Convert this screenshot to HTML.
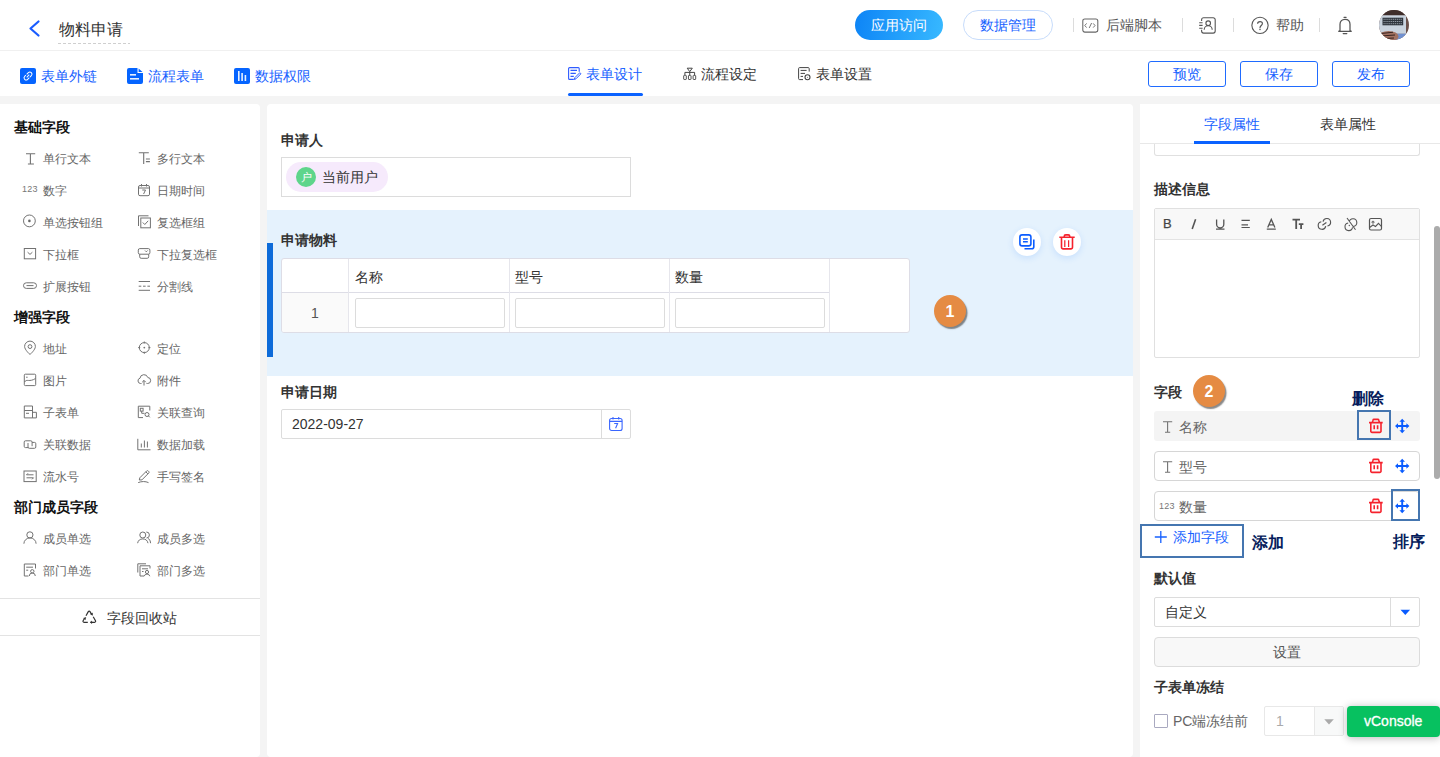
<!DOCTYPE html>
<html><head><meta charset="utf-8">
<style>
*{box-sizing:border-box;margin:0;padding:0}
html,body{width:1440px;height:757px;overflow:hidden}
body{position:relative;background:#f4f4f4;font-family:"Liberation Sans",sans-serif;font-size:14px;color:#333}
.a{position:absolute}
.t{position:absolute;white-space:nowrap;line-height:20px;font-size:14px}
.b{font-weight:bold}
svg{position:absolute;overflow:visible}
#hdr{left:0;top:0;width:1440px;height:50px;background:#fff}
#hline{left:0;top:50px;width:1440px;height:1px;background:#f0f0f0}
#tb{left:0;top:51px;width:1440px;height:45px;background:#fff}
#lp{left:0;top:104px;width:260px;height:653px;background:#fff;border-radius:0 4px 4px 0}
#cp{left:267px;top:104px;width:866px;height:653px;background:#fff;border-radius:4px}
#rp{left:1140px;top:104px;width:300px;height:653px;background:#fff}
.sep{position:absolute;width:1px;height:14px;background:#dcdcdc;top:18px}
.obtn{position:absolute;top:61px;width:78px;height:26px;border:1px solid #1f6bff;border-radius:3px;color:#1661ff;text-align:center;line-height:24px;font-size:14px}
.lh{position:absolute;left:14px;font-weight:bold;color:#111;line-height:20px;white-space:nowrap}
.li{position:absolute;font-size:12px;color:#666;line-height:20px;white-space:nowrap}
.fl{position:absolute;left:281px;font-weight:bold;color:#333;line-height:20px;white-space:nowrap}
.ann{position:absolute;font-weight:bold;color:#061c5c;font-size:16px;line-height:20px;white-space:nowrap}
.abox{position:absolute;border:2px solid #4576b0}
</style></head><body>

<div id="hdr" class="a"></div>
<div id="hline" class="a"></div>
<div id="tb" class="a"></div>
<div id="lp" class="a"></div>
<div id="cp" class="a"></div>
<div id="rp" class="a"></div>

<!-- HEADER -->
<svg style="left:0;top:0" width="50" height="50"><polyline points="38.5,21.5 30.5,28.5 38.5,35.5" fill="none" stroke="#1a5cff" stroke-width="2.2" stroke-linecap="round" stroke-linejoin="round"/></svg>
<div class="t" style="left:59px;top:20px;font-size:16px;color:#333">物料申请</div>
<div class="a" style="left:58px;top:43px;width:72px;height:1px;background:repeating-linear-gradient(90deg,#cfcfcf 0 3px,transparent 3px 5px)"></div>
<div class="a" style="left:855px;top:10px;width:88px;height:30px;border-radius:15px;background:linear-gradient(100deg,#0d84f6,#38b9ff);color:#fff;text-align:center;line-height:30px">应用访问</div>
<div class="a" style="left:963px;top:10px;width:90px;height:30px;border-radius:15px;border:1px solid #c7dcfb;color:#1661ff;text-align:center;line-height:28px">数据管理</div>
<div class="sep" style="left:1073px"></div>
<svg style="left:1081px;top:17px" width="19" height="18"><rect x="1.8" y="1.9" width="15" height="13.2" rx="2" fill="none" stroke="#666" stroke-width="1.05"/><path d="M5.6 6.4 L3.8 8.5 L5.6 10.6 M12.2 6.4 L14 8.5 L12.2 10.6 M10.6 6 L8.2 11" fill="none" stroke="#666" stroke-width="0.9"/></svg>
<div class="t" style="left:1106px;top:15px;color:#555">后端脚本</div>
<div class="sep" style="left:1182px"></div>
<svg style="left:1198px;top:16px" width="20" height="19"><path d="M3.6 5 V3.7 A2 2 0 0 1 5.6 1.7 H15.2 A2 2 0 0 1 17.2 3.7 V15.1 A2 2 0 0 1 15.2 17.1 H5.6 A2 2 0 0 1 3.6 15.1 V13.8 M1.2 6.7 H4.6 M1.2 9.4 H4.6 M1.2 12.2 H4.6" fill="none" stroke="#555" stroke-width="1.1"/><circle cx="10.2" cy="7.2" r="2.3" fill="none" stroke="#555" stroke-width="1.1"/><path d="M6.2 13.8 A4 4 0 0 1 14.2 13.8" fill="none" stroke="#555" stroke-width="1.1"/></svg>
<div class="sep" style="left:1233px"></div>
<svg style="left:1250px;top:16px" width="20" height="20"><circle cx="10" cy="9.35" r="8.15" fill="none" stroke="#555" stroke-width="1.1"/><path d="M7.6 7.7 C7.6 4.9 12.4 4.9 12.4 7.6 C12.4 9.4 10 9.6 10 11.7 V12.2" fill="none" stroke="#555" stroke-width="1.15"/><circle cx="10" cy="13.6" r=".75" fill="#555"/></svg>
<div class="t" style="left:1276px;top:15px;color:#555">帮助</div>
<div class="sep" style="left:1319px"></div>
<svg style="left:1337px;top:16px" width="16" height="19"><path d="M7 1.3 H9.1 M3 14.6 V8.3 C3 5.3 5 3.3 8 3.3 C11 3.3 13 5.3 13 8.3 V14.6 L14.3 15.3 H1.7 L3 14.6 M6.2 17.5 H9.8" fill="none" stroke="#555" stroke-width="1.25" stroke-linecap="round" stroke-linejoin="round"/></svg>
<svg style="left:1379px;top:10px" width="30" height="30"><defs><clipPath id="av"><circle cx="15" cy="15" r="15"/></clipPath></defs><g clip-path="url(#av)"><rect width="30" height="30" fill="#6a504a"/><rect x="0" y="0" width="30" height="5.3" fill="#3f2e2b"/><rect x="0" y="5.3" width="27" height="18.5" fill="#c9d3de"/><rect x="3.5" y="7.7" width="20.7" height="7.6" fill="#2f353d"/><path d="M4.5 9.3 H23.2 M4.5 11.5 H23.2 M4.5 13.7 H23.2" stroke="#a9b2bc" stroke-width="0.8" stroke-dasharray="1.2 0.7"/><path d="M17 23.8 L28 23.8 L28 30 L14 30 Z" fill="#7090d0"/><ellipse cx="9.5" cy="26.5" rx="10" ry="5.5" fill="#a27262"/><path d="M2 23.5 L14 22.3 M1.5 26 L16 25 M3 28.6 L15 28" stroke="#3a2622" stroke-width="1.1"/><rect x="0" y="22" width="30" height="1" fill="#b7c3cf" opacity=".0"/></g></svg>

<!-- TOOLBAR -->
<svg style="left:20px;top:68px" width="16" height="16"><rect width="16" height="16" rx="2" fill="#0564ff"/><g transform="rotate(-45 8 8)"><path d="M7 5.9 H5.4 A2.1 2.1 0 0 0 5.4 10.1 H7.8 M8.6 10.1 H10.6 A2.1 2.1 0 0 0 10.6 5.9 H8.2" fill="none" stroke="#fff" stroke-width="1"/><path d="M6.2 8 H9.8" stroke="#fff" stroke-width="1"/></g></svg>
<div class="t" style="left:41px;top:66px;color:#1661ff">表单外链</div>
<svg style="left:127px;top:68px" width="16" height="16"><path d="M2 0 H10.5 V5 H16 V14 A2 2 0 0 1 14 16 H2 A2 2 0 0 1 0 14 V2 A2 2 0 0 1 2 0 Z" fill="#0564ff"/><path d="M11.6 0.5 L15.5 4 H11.6 Z" fill="#0564ff"/><rect x="3" y="6" width="6" height="1.6" fill="#fff" opacity=".9"/><rect x="3" y="10" width="9" height="1.6" fill="#fff" opacity=".9"/></svg>
<div class="t" style="left:148px;top:66px;color:#1661ff">流程表单</div>
<svg style="left:234px;top:68px" width="16" height="16"><rect width="16" height="16" rx="2" fill="#0564ff"/><rect x="4" y="3" width="1.6" height="10" fill="#fff" opacity=".9"/><rect x="7.3" y="5" width="1.6" height="8" fill="#fff" opacity=".9"/><rect x="10.6" y="7" width="1.6" height="6" fill="#fff" opacity=".9"/></svg>
<div class="t" style="left:255px;top:66px;color:#1661ff">数据权限</div>

<svg style="left:568px;top:67px" width="15" height="14"><path d="M11.2 4.8 V1.6 A1 1 0 0 0 10.2 0.6 H1.6 A1 1 0 0 0 0.6 1.6 V11.4 A1 1 0 0 0 1.6 12.4 H5.8 M2.5 3.4 H9 M2.5 6.4 H7.8 M2.5 9.4 H5.8" fill="none" stroke="#2f5bff" stroke-width="1.1"/><path d="M6.3 12.5 L6.9 10.6 L11.8 5.7 L12.9 6.8 L8 11.8 Z" fill="none" stroke="#2f5bff" stroke-width="1"/></svg>
<div class="t" style="left:586px;top:64px;color:#1661ff">表单设计</div>
<div class="a" style="left:568px;top:93px;width:75px;height:3px;border-radius:2px;background:#0a62ff"></div>
<svg style="left:683px;top:67px" width="14" height="14"><path d="M4.2 1.2 H9.3 L6.75 4.6 Z M6.75 4.6 V8 M1.9 8 V5.4 H11.6 V8" fill="none" stroke="#444" stroke-width="1"/><rect x="0.7" y="8.4" width="2.6" height="4.1" rx=".5" fill="none" stroke="#555" stroke-width="1"/><rect x="5.45" y="8.4" width="2.6" height="4.1" rx=".5" fill="none" stroke="#555" stroke-width="1"/><rect x="10.1" y="8.4" width="2.6" height="4.1" rx=".5" fill="none" stroke="#555" stroke-width="1"/></svg>
<div class="t" style="left:701px;top:64px;color:#333">流程设定</div>
<svg style="left:798px;top:67px" width="14" height="14"><path d="M11.2 4.6 V1.6 A1 1 0 0 0 10.2 0.6 H1.6 A1 1 0 0 0 0.6 1.6 V11.6 A1 1 0 0 0 1.6 12.6 H5 M2.6 3.4 H8.6 M2.6 6.4 H7 M2.6 9.4 H5" fill="none" stroke="#444" stroke-width="1"/><circle cx="9.5" cy="10.3" r="2.5" fill="none" stroke="#444" stroke-width="1.1"/><circle cx="9.5" cy="10.3" r=".6" fill="#888"/></svg>
<div class="t" style="left:816px;top:64px;color:#333">表单设置</div>

<div class="obtn" style="left:1148px">预览</div>
<div class="obtn" style="left:1240px">保存</div>
<div class="obtn" style="left:1332px">发布</div>

<!-- LEFT PANEL -->
<div class="lh" style="top:117px">基础字段</div>
<div class="lh" style="top:307px">增强字段</div>
<div class="lh" style="top:497px">部门成员字段</div>

<div class="li" style="left:43px;top:149px">单行文本</div>
<div class="li" style="left:157px;top:149px">多行文本</div>
<div class="li" style="left:43px;top:181px">数字</div>
<div class="li" style="left:157px;top:181px">日期时间</div>
<div class="li" style="left:43px;top:213px">单选按钮组</div>
<div class="li" style="left:157px;top:213px">复选框组</div>
<div class="li" style="left:43px;top:245px">下拉框</div>
<div class="li" style="left:157px;top:245px">下拉复选框</div>
<div class="li" style="left:43px;top:277px">扩展按钮</div>
<div class="li" style="left:157px;top:277px">分割线</div>

<div class="li" style="left:43px;top:339px">地址</div>
<div class="li" style="left:157px;top:339px">定位</div>
<div class="li" style="left:43px;top:371px">图片</div>
<div class="li" style="left:157px;top:371px">附件</div>
<div class="li" style="left:43px;top:403px">子表单</div>
<div class="li" style="left:157px;top:403px">关联查询</div>
<div class="li" style="left:43px;top:435px">关联数据</div>
<div class="li" style="left:157px;top:435px">数据加载</div>
<div class="li" style="left:43px;top:467px">流水号</div>
<div class="li" style="left:157px;top:467px">手写签名</div>

<div class="li" style="left:43px;top:529px">成员单选</div>
<div class="li" style="left:157px;top:529px">成员多选</div>
<div class="li" style="left:43px;top:561px">部门单选</div>
<div class="li" style="left:157px;top:561px">部门多选</div>


<svg style="left:23px;top:151.5px" width="14" height="14"><path d="M3 1.8 H12.2 M7.4 1.8 V12 M4.9 12 H10.9" fill="none" stroke="#727272" stroke-width="1.1"/></svg>
<svg style="left:137px;top:151.5px" width="14" height="14"><path d="M1.8 0.7 H11.8 M6.7 0.7 V12 M8.9 7 H12.9 M8.9 9.6 H12.9" fill="none" stroke="#727272" stroke-width="1.1"/></svg>
<div class="a" style="left:22px;top:183px;font-size:9px;line-height:12px;color:#777;letter-spacing:0.2px">123</div>
<svg style="left:137px;top:183px" width="14" height="14"><rect x="1.5" y="2.5" width="11" height="10.2" rx="1.5" fill="none" stroke="#727272" stroke-width="1"/><path d="M1.5 5 H12.5 M4.5 1 V3.5 M9.5 1 V3.5 M5.3 7 H8.5 L6.6 11" fill="none" stroke="#727272" stroke-width="1"/></svg>
<svg style="left:23px;top:214px" width="14" height="14"><circle cx="6.4" cy="6.9" r="5.9" fill="none" stroke="#727272" stroke-width="1"/><circle cx="6.4" cy="6.9" r="1.3" fill="#666"/></svg>
<svg style="left:137px;top:215px" width="14" height="14"><path d="M1.5 11 V0.8 H11.5" fill="none" stroke="#727272" stroke-width="1"/><rect x="3.8" y="3" width="9.6" height="9.8" fill="none" stroke="#727272" stroke-width="1"/><path d="M5.8 7.5 L7.8 9.5 L11.2 5.8" fill="none" stroke="#727272" stroke-width="1"/></svg>
<svg style="left:23px;top:247px" width="14" height="14"><rect x="1.3" y="1.5" width="11.3" height="10.3" fill="none" stroke="#727272" stroke-width="1"/><path d="M4.6 5.2 L7 7.4 L9.4 5.2" fill="none" stroke="#727272" stroke-width="1"/></svg>
<svg style="left:137px;top:247px" width="14" height="14"><rect x="1.3" y="1.6" width="11.6" height="5.6" rx="1.5" fill="none" stroke="#727272" stroke-width="1"/><path d="M2.7 7.2 V9.8 A1.5 1.5 0 0 0 4.2 11.3 H10.2 A1.5 1.5 0 0 0 11.7 9.8 V7.2 M8 3.5 L9.3 4.8 L10.6 3.5" fill="none" stroke="#727272" stroke-width="1"/></svg>
<svg style="left:23px;top:279px" width="14" height="14"><rect x="0.5" y="3.8" width="13" height="5.6" rx="2.8" fill="none" stroke="#727272" stroke-width="1"/><path d="M3.5 6.6 H10.5" stroke="#727272" stroke-width="1"/></svg>
<svg style="left:137px;top:279px" width="14" height="14"><path d="M1.7 2.5 H13 M1.7 11.3 H13" stroke="#727272" stroke-width="1"/><path d="M1.7 7.2 H13" stroke="#727272" stroke-width="1" stroke-dasharray="2.6 1.75"/></svg>

<svg style="left:23px;top:341px" width="14" height="14"><path d="M7 13.5 C7 13.5 12.4 8.8 12.4 5.5 A5.4 5.4 0 0 0 1.6 5.5 C1.6 8.8 7 13.5 7 13.5 Z" fill="none" stroke="#727272" stroke-width="1"/><circle cx="7" cy="5.6" r="1.9" fill="none" stroke="#727272" stroke-width="1"/></svg>
<svg style="left:137px;top:341px" width="14" height="14"><circle cx="7.3" cy="6.6" r="5" fill="none" stroke="#727272" stroke-width="1"/><path d="M7.3 0.5 V2.5 M7.3 10.7 V12.8 M1.2 6.6 H3.2 M11.4 6.6 H13.4" stroke="#727272" stroke-width="1"/><circle cx="7.3" cy="6.6" r="0.9" fill="#777"/></svg>
<svg style="left:23px;top:373px" width="14" height="14"><rect x="1.3" y="1.2" width="11.4" height="11.4" rx="1" fill="none" stroke="#727272" stroke-width="1"/><path d="M1.5 9 C3.5 5.5 6.5 9.5 12.5 5.5" fill="none" stroke="#727272" stroke-width="1"/><circle cx="3.9" cy="4.2" r="0.7" fill="#777"/></svg>
<svg style="left:137px;top:373px" width="14" height="14"><path d="M4.5 10.5 H3.5 A2.7 2.7 0 0 1 3 5.2 A4 4 0 0 1 10.8 4.5 A3 3 0 0 1 10.5 10.5 H9.5 M7 12.5 V7.5 M5.2 9.2 L7 7.4 L8.8 9.2" fill="none" stroke="#727272" stroke-width="1"/></svg>
<svg style="left:23px;top:405px" width="14" height="14"><path d="M1.3 1 H9.5 V12.9 H1.3 Z M1.3 5.5 H9.5 M3 8.3 H6 M9.5 7.3 H13.4 V12.9 H9.5" fill="none" stroke="#727272" stroke-width="1"/></svg>
<svg style="left:137px;top:405px" width="14" height="14"><path d="M12.8 5.5 V1.2 H1.3 V12.6 H6" fill="none" stroke="#727272" stroke-width="1"/><rect x="3.3" y="3.3" width="2.8" height="2.8" fill="none" stroke="#727272" stroke-width="1"/><path d="M4.7 6.1 V8.3 H7.5" fill="none" stroke="#727272" stroke-width="1"/><circle cx="10" cy="9.5" r="2" fill="none" stroke="#727272" stroke-width="1"/><path d="M11.4 10.9 L12.8 12.3" stroke="#727272" stroke-width="1"/></svg>
<svg style="left:23px;top:437.5px" width="14" height="14"><path d="M5.3 9.6 H2.5 A1.3 1.3 0 0 1 1.2 8.3 V4.1 A1.3 1.3 0 0 1 2.5 2.8 H7.8 A1.3 1.3 0 0 1 9.1 4.1 V8.2 M9 4.4 H11.5 A1.3 1.3 0 0 1 12.8 5.7 V9 A1.3 1.3 0 0 1 11.5 10.3 H6.3 A1.3 1.3 0 0 1 5 9 V5" fill="none" stroke="#727272" stroke-width="1"/></svg>
<svg style="left:137px;top:437.5px" width="14" height="14"><path d="M0.8 0.8 V11.8 H13.5 M4.3 5.5 V9.5 M7.4 2.5 V9.5 M10.4 3.5 V9.5" fill="none" stroke="#727272" stroke-width="1"/></svg>
<svg style="left:23px;top:469.5px" width="14" height="14"><rect x="1" y="1" width="12.2" height="10.6" fill="none" stroke="#727272" stroke-width="1"/><path d="M3.5 4.8 H10.5 M5 3.3 L3.5 4.8 M3.5 7.8 H10.5 M9 9.3 L10.5 7.8" fill="none" stroke="#727272" stroke-width="1"/></svg>
<svg style="left:137px;top:469.5px" width="14" height="14"><path d="M2.3 10 L2.8 7.8 L9.6 1 A1.2 1.2 0 0 1 11.3 1 L11.7 1.4 A1.2 1.2 0 0 1 11.7 3.1 L4.9 9.9 Z M8.8 1.8 L10.9 3.9 M1.2 12.6 C4.5 11.2 8.5 11.2 11.5 12.6" fill="none" stroke="#727272" stroke-width="1"/></svg>

<svg style="left:23px;top:531px" width="14" height="14"><circle cx="6.9" cy="3.9" r="3.1" fill="none" stroke="#727272" stroke-width="1"/><path d="M0.9 12.7 A6.1 5.8 0 0 1 13.1 12.7" fill="none" stroke="#727272" stroke-width="1"/></svg>
<svg style="left:137px;top:531px" width="14" height="14"><circle cx="5.8" cy="4" r="3" fill="none" stroke="#727272" stroke-width="1"/><path d="M0.6 12.2 A5.3 5.3 0 0 1 11 12.2 M9.3 1 A3 3 0 0 1 9.5 7 M10.8 7.2 A5.3 5.3 0 0 1 13.6 12.2" fill="none" stroke="#727272" stroke-width="1"/></svg>
<svg style="left:23px;top:562.5px" width="14" height="14"><path d="M12.5 5.5 V1 H1.3 V13 H5.5 M3.2 4.2 H10 M3.2 7.2 H5.2" fill="none" stroke="#727272" stroke-width="1"/><circle cx="9.3" cy="8.3" r="1.7" fill="none" stroke="#727272" stroke-width="1"/><path d="M6.3 13 A3 3 0 0 1 12.3 13" fill="none" stroke="#727272" stroke-width="1"/></svg>
<svg style="left:137px;top:562.5px" width="14" height="14"><path d="M0.8 9.5 V0.8 H9 M13 5.5 V2.8 H3 V13 H7 M5 5.8 H11 M5 8.5 H6.5" fill="none" stroke="#727272" stroke-width="1"/><circle cx="10" cy="9" r="1.6" fill="none" stroke="#727272" stroke-width="1"/><path d="M7.2 13.2 A2.9 2.9 0 0 1 12.8 13.2" fill="none" stroke="#727272" stroke-width="1"/></svg>

<div class="a" style="left:0;top:598px;width:260px;height:1px;background:#e3e3e3"></div>
<div class="a" style="left:0;top:635px;width:260px;height:1px;background:#e3e3e3"></div>
<svg style="left:82px;top:610px" width="16" height="15"><path d="M4 5.8 L6.3 1.6 A1 1 0 0 1 8 1.6 L9.8 4.6 M11.2 6.8 L13.5 10.8 A1 1 0 0 1 12.6 12.3 L8.5 12.3 M5.8 12.3 L2 12.3 A1 1 0 0 1 1.1 10.8 L2.6 8.2" fill="none" stroke="#333" stroke-width="1.2"/><path d="M8.5 4 L10.5 5.3 L10.4 3 Z M3.7 7.4 L1.7 8.3 L3.4 9.6 Z M9.7 11.1 L8.3 12.3 L9.7 13.5 Z" fill="#333" stroke="#333" stroke-width=".6"/></svg>
<div class="t" style="left:107px;top:608px;color:#333">字段回收站</div>

<!-- CENTER -->
<div class="fl" style="top:130px">申请人</div>
<div class="a" style="left:281px;top:157px;width:350px;height:40px;border:1px solid #dcdcdc"></div>
<div class="a" style="left:286px;top:162px;width:102px;height:30px;border-radius:15px;background:#f6eafc"></div>
<div class="a" style="left:296px;top:167px;width:20px;height:20px;border-radius:10px;background:#5ed58b;color:#fff;font-size:11px;line-height:20px;text-align:center">户</div>
<div class="t" style="left:322px;top:167px;color:#333">当前用户</div>

<div class="a" style="left:267px;top:210px;width:866px;height:166px;background:#e5f2fd"></div>
<div class="a" style="left:267px;top:243px;width:6px;height:114px;background:#0d6bd9"></div>
<div class="fl" style="top:230px">申请物料</div>
<div class="a" style="left:281px;top:258px;width:629px;height:75px;border:1px solid #dddde6;border-radius:3px;background:#fff;overflow:hidden">
  <div class="a" style="left:0;top:34px;width:66px;height:40px;background:#fafafa"></div>
  <div class="a" style="left:0;top:33px;width:548px;height:1px;background:#dddde6"></div>
  <div class="a" style="left:66px;top:0;width:1px;height:75px;background:#e6e6ec"></div>
  <div class="a" style="left:227px;top:0;width:1px;height:75px;background:#e6e6ec"></div>
  <div class="a" style="left:387px;top:0;width:1px;height:75px;background:#e6e6ec"></div>
  <div class="a" style="left:547px;top:0;width:1px;height:75px;background:#e6e6ec"></div>
</div>
<div class="t" style="left:355px;top:267px;color:#333">名称</div>
<div class="t" style="left:515px;top:267px;color:#333">型号</div>
<div class="t" style="left:675px;top:267px;color:#333">数量</div>
<div class="t" style="left:310px;top:303px;color:#555;width:10px;text-align:center">1</div>
<div class="a" style="left:355px;top:298px;width:150px;height:30px;border:1px solid #dcdcdc;border-radius:2px;background:#fff"></div>
<div class="a" style="left:515px;top:298px;width:150px;height:30px;border:1px solid #dcdcdc;border-radius:2px;background:#fff"></div>
<div class="a" style="left:675px;top:298px;width:150px;height:30px;border:1px solid #dcdcdc;border-radius:2px;background:#fff"></div>

<div class="a" style="left:934px;top:295px;width:32px;height:32px;border-radius:16px;background:#e58b43;box-shadow:1.5px 2px 1.2px rgba(40,40,40,.55);color:#fff;font-weight:bold;font-size:16px;line-height:34px;text-align:center">1</div>

<div class="a" style="left:1013px;top:228px;width:28px;height:28px;border-radius:14px;background:#fff;box-shadow:0 2px 6px rgba(60,140,255,.18)"></div>
<svg style="left:1019px;top:234px" width="16" height="16"><rect x="0.9" y="0.9" width="11" height="11" rx="2.2" fill="none" stroke="#0a5cff" stroke-width="1.6"/><path d="M4 5 H8.8 M4 7.8 H8.8" stroke="#0a5cff" stroke-width="1.5"/><path d="M14.8 5.5 V12.8 A2 2 0 0 1 12.8 14.8 H5.5" fill="none" stroke="#0a5cff" stroke-width="1.6"/></svg>
<div class="a" style="left:1053px;top:228px;width:28px;height:28px;border-radius:14px;background:#fff;box-shadow:0 2px 6px rgba(60,140,255,.18)"></div>
<svg style="left:1059px;top:234px" width="16" height="16"><path d="M0.3 3.3 H15.7 M5.2 3.3 V2.5 A1.6 1.6 0 0 1 6.8 0.9 H9.2 A1.6 1.6 0 0 1 10.8 2.5 V3.3 M2.5 3.5 V13.3 A1.6 1.6 0 0 0 4.1 14.9 H11.9 A1.6 1.6 0 0 0 13.5 13.3 V3.5" fill="none" stroke="#f5222d" stroke-width="1.6"/><path d="M5.8 6.2 V12.9 M9.6 6.2 V12.9" stroke="#f5222d" stroke-width="1.25"/></svg>

<div class="a" style="left:267px;top:376px;width:866px;height:1px;background:#fff"></div>
<div class="fl" style="top:382px">申请日期</div>
<div class="a" style="left:281px;top:409px;width:350px;height:30px;border:1px solid #dcdcdc;border-radius:2px"></div>
<div class="a" style="left:601px;top:409px;width:1px;height:30px;background:#dcdcdc"></div>
<div class="t" style="left:292px;top:414px;color:#333">2022-09-27</div>
<!-- RIGHT PANEL -->
<div class="a" style="left:1154px;top:140px;width:266px;height:16px;border:1px solid #e0e0e0;border-top:none;border-radius:0 0 3px 3px"></div>
<div class="a" style="left:1140px;top:104px;width:300px;height:39px;background:#fff"></div>
<div class="a" style="left:1140px;top:143px;width:300px;height:1px;background:#e8e8e8"></div>
<div class="t" style="left:1204px;top:114px;color:#1661ff">字段属性</div>
<div class="t" style="left:1320px;top:114px;color:#333">表单属性</div>
<div class="a" style="left:1194px;top:141px;width:76px;height:3px;background:#0a62ff"></div>

<div class="fl" style="left:1154px;top:179px">描述信息</div>
<div class="a" style="left:1154px;top:208px;width:266px;height:150px;border:1px solid #e0e0e0;border-radius:2px;background:#fff"></div>
<div class="a" style="left:1155px;top:209px;width:264px;height:31px;background:#f8f8f8;border-bottom:1px solid #e3e3e3"></div>
<div class="a" style="left:1163px;top:214px;font-size:13px;line-height:20px;color:#444;-webkit-text-stroke:0.25px #444">B</div>
<svg style="left:1189px;top:218px" width="9" height="13"><path d="M6.6 1.2 L3.2 11" stroke="#555" stroke-width="1.6"/></svg>
<svg style="left:1214px;top:217px" width="13" height="14"><path d="M2.6 2.4 V7.3 A3.6 3.6 0 0 0 9.8 7.3 V2.4 M2 12.1 H10.5" fill="none" stroke="#555" stroke-width="1.3"/></svg>
<svg style="left:1240px;top:218px" width="12" height="12"><path d="M1.5 2.3 H9.8 M1.5 6.8 H8 M1.5 9.5 H9.8" stroke="#555" stroke-width="1.2"/></svg>
<svg style="left:1265px;top:217px" width="13" height="14"><path d="M2.7 10.4 L6.3 2.4 L9.9 10.4 M3.9 7.8 H8.7 M1.8 12.2 H10.8" fill="none" stroke="#555" stroke-width="1.3"/></svg>
<svg style="left:1291px;top:217px" width="14" height="14"><path d="M1.5 2.6 H9 M5.2 2.6 V12 M7.8 7.2 H12.4 M10.1 7.2 V12" fill="none" stroke="#555" stroke-width="1.8"/></svg>
<svg style="left:1316px;top:216px" width="16" height="16"><path d="M5.34 5.76 A3.8 3.8 0 1 0 9.74 10.16 M11.46 10.04 A3.8 3.8 0 1 0 7.06 5.64 M6.4 9.3 L10.4 6.5" fill="none" stroke="#555" stroke-width="1.15"/></svg>
<svg style="left:1342px;top:216px" width="16" height="16"><path d="M6.14 7.06 A3.8 3.8 0 1 0 10.54 11.46 M11.66 10.34 A3.8 3.8 0 1 0 7.26 5.94 M5 2 L13.5 13.8" fill="none" stroke="#555" stroke-width="1.1"/><circle cx="7.3" cy="9.5" r=".65" fill="#555"/></svg>
<svg style="left:1368px;top:217px" width="15" height="14"><rect x="1.5" y="1.5" width="12" height="11.5" rx="1.5" fill="none" stroke="#555" stroke-width="1.2"/><circle cx="5" cy="5.2" r="1" fill="none" stroke="#555" stroke-width="1"/><path d="M1.6 10.5 L5 8 L7.5 9.5 L10.5 6.3 L13.4 9.5" fill="none" stroke="#555" stroke-width="1.1"/></svg>

<div class="a" style="left:1434px;top:226px;width:6px;height:253px;border-radius:3px;background:#ababab"></div>

<div class="fl" style="left:1154px;top:382px">字段</div>
<div class="a" style="left:1193px;top:375px;width:32px;height:32px;border-radius:16px;background:#e58b43;box-shadow:1.5px 2px 1.2px rgba(40,40,40,.55);color:#fff;font-weight:bold;font-size:16px;line-height:34px;text-align:center">2</div>

<div class="a" style="left:1154px;top:411px;width:266px;height:30px;border-radius:3px;background:#f4f4f4"></div>
<div class="a" style="left:1154px;top:451px;width:266px;height:30px;border-radius:4px;border:1px solid #d6d6d6;background:#fff"></div>
<div class="a" style="left:1154px;top:491px;width:266px;height:30px;border-radius:4px;border:1px solid #d6d6d6;background:#fff"></div>
<svg style="left:1161px;top:420px" width="14" height="14"><path d="M2 1.7 H11.2 M6.6 1.7 V12.3 M4 12.3 H9.2" fill="none" stroke="#727272" stroke-width="1.1"/></svg>
<svg style="left:1161px;top:460px" width="14" height="14"><path d="M2 1.7 H11.2 M6.6 1.7 V12.3 M4 12.3 H9.2" fill="none" stroke="#727272" stroke-width="1.1"/></svg>
<div class="a" style="left:1159px;top:500px;font-size:9px;line-height:12px;color:#777;letter-spacing:0.2px">123</div>
<div class="t" style="left:1179px;top:417px;color:#666">名称</div>
<div class="t" style="left:1179px;top:457px;color:#666">型号</div>
<div class="t" style="left:1179px;top:497px;color:#666">数量</div>

<svg style="left:1368px;top:418px" width="16" height="16"><path d="M1 4.6 H14.7 M4.3 4.6 L5 2.2 A1 1 0 0 1 6 1.4 H9.8 A1 1 0 0 1 10.8 2.2 L11.5 4.6 M2.8 4.8 V13.2 A1.2 1.2 0 0 0 4 14.4 H11.8 A1.2 1.2 0 0 0 13 13.2 V4.8 M6.2 7.3 V11.3 M9.6 7.3 V11.3" fill="none" stroke="#f5222d" stroke-width="1.6"/></svg>
<svg style="left:1368px;top:458px" width="16" height="16"><path d="M1 4.6 H14.7 M4.3 4.6 L5 2.2 A1 1 0 0 1 6 1.4 H9.8 A1 1 0 0 1 10.8 2.2 L11.5 4.6 M2.8 4.8 V13.2 A1.2 1.2 0 0 0 4 14.4 H11.8 A1.2 1.2 0 0 0 13 13.2 V4.8 M6.2 7.3 V11.3 M9.6 7.3 V11.3" fill="none" stroke="#f5222d" stroke-width="1.6"/></svg>
<svg style="left:1368px;top:498px" width="16" height="16"><path d="M1 4.6 H14.7 M4.3 4.6 L5 2.2 A1 1 0 0 1 6 1.4 H9.8 A1 1 0 0 1 10.8 2.2 L11.5 4.6 M2.8 4.8 V13.2 A1.2 1.2 0 0 0 4 14.4 H11.8 A1.2 1.2 0 0 0 13 13.2 V4.8 M6.2 7.3 V11.3 M9.6 7.3 V11.3" fill="none" stroke="#f5222d" stroke-width="1.6"/></svg>
<svg style="left:1394px;top:418px" width="16" height="16"><path d="M8.2 3 V13 M3 8 H13.4" stroke="#0a5cff" stroke-width="1.9"/><path d="M8.2 0.8 L11 3.8 H5.4 Z M8.2 15.2 L11 12.2 H5.4 Z M1 8 L4 5.2 V10.8 Z M15.4 8 L12.4 5.2 V10.8 Z" fill="#0a5cff"/></svg>
<svg style="left:1394px;top:458px" width="16" height="16"><path d="M8.2 3 V13 M3 8 H13.4" stroke="#0a5cff" stroke-width="1.9"/><path d="M8.2 0.8 L11 3.8 H5.4 Z M8.2 15.2 L11 12.2 H5.4 Z M1 8 L4 5.2 V10.8 Z M15.4 8 L12.4 5.2 V10.8 Z" fill="#0a5cff"/></svg>
<svg style="left:1394px;top:498px" width="16" height="16"><path d="M8.2 3 V13 M3 8 H13.4" stroke="#0a5cff" stroke-width="1.9"/><path d="M8.2 0.8 L11 3.8 H5.4 Z M8.2 15.2 L11 12.2 H5.4 Z M1 8 L4 5.2 V10.8 Z M15.4 8 L12.4 5.2 V10.8 Z" fill="#0a5cff"/></svg>

<div class="ann" style="left:1352px;top:389px">删除</div>
<div class="abox" style="left:1357px;top:410px;width:34px;height:30px"></div>
<div class="abox" style="left:1391px;top:489px;width:29px;height:32px"></div>
<div class="abox" style="left:1140px;top:524px;width:104px;height:34px"></div>
<svg style="left:1154px;top:530px" width="14" height="14"><path d="M6.8 1 V13 M0.8 7 H12.8" stroke="#1661ff" stroke-width="1.3"/></svg>
<div class="t" style="left:1173px;top:527px;color:#1661ff">添加字段</div>
<div class="ann" style="left:1252px;top:533px">添加</div>
<div class="ann" style="left:1393px;top:532px">排序</div>

<div class="fl" style="left:1154px;top:568px">默认值</div>
<div class="a" style="left:1154px;top:597px;width:266px;height:30px;border:1px solid #dcdcdc;border-radius:2px"></div>
<div class="a" style="left:1390px;top:597px;width:1px;height:30px;background:#dcdcdc"></div>
<div class="t" style="left:1165px;top:602px;color:#333">自定义</div>
<svg style="left:1400px;top:609px" width="11" height="7"><path d="M0.5 0.8 H10.1 L5.3 5.9 Z" fill="#0a5cff"/></svg>
<div class="a" style="left:1154px;top:637px;width:266px;height:30px;border:1px solid #dcdcdc;border-radius:4px;background:#f8f8f8;color:#555;text-align:center;line-height:28px">设置</div>

<div class="fl" style="left:1154px;top:677px">子表单冻结</div>
<div class="a" style="left:1154px;top:714px;width:14px;height:14px;border:1px solid #a9a9c0;border-radius:1px"></div>
<div class="t" style="left:1173px;top:711px;color:#666">PC端冻结前</div>
<div class="a" style="left:1264px;top:706px;width:80px;height:30px;border:1px solid #e8e8e8;border-radius:2px;background:#fff"></div>
<div class="a" style="left:1314px;top:707px;width:29px;height:28px;background:#f8f9f9;border-left:1px solid #e8e8e8"></div>
<div class="t" style="left:1276px;top:711px;color:#aaa">1</div>
<svg style="left:1324px;top:719px" width="11" height="7"><path d="M0.3 0.3 H9.8 L5 5.5 Z" fill="#aaa"/></svg>
<div class="a" style="left:1347px;top:706px;width:93px;height:31px;border-radius:4px;background:#07c160;box-shadow:0 1px 8px rgba(0,0,0,.28);color:#fff;font-size:14px;line-height:31px;padding-left:17px;-webkit-text-stroke:0.3px #fff">vConsole</div>

<svg style="left:608px;top:416px" width="16" height="16"><rect x="1.6" y="2.5" width="12.5" height="12" rx="2" fill="none" stroke="#3a66ff" stroke-width="1.1"/><path d="M1.6 5.4 H14.1 M5 1 V3.6 M10.7 1 V3.6 M6.2 7.5 H9.6 L7.6 12.3" fill="none" stroke="#3a66ff" stroke-width="1.1"/></svg>

</body></html>
